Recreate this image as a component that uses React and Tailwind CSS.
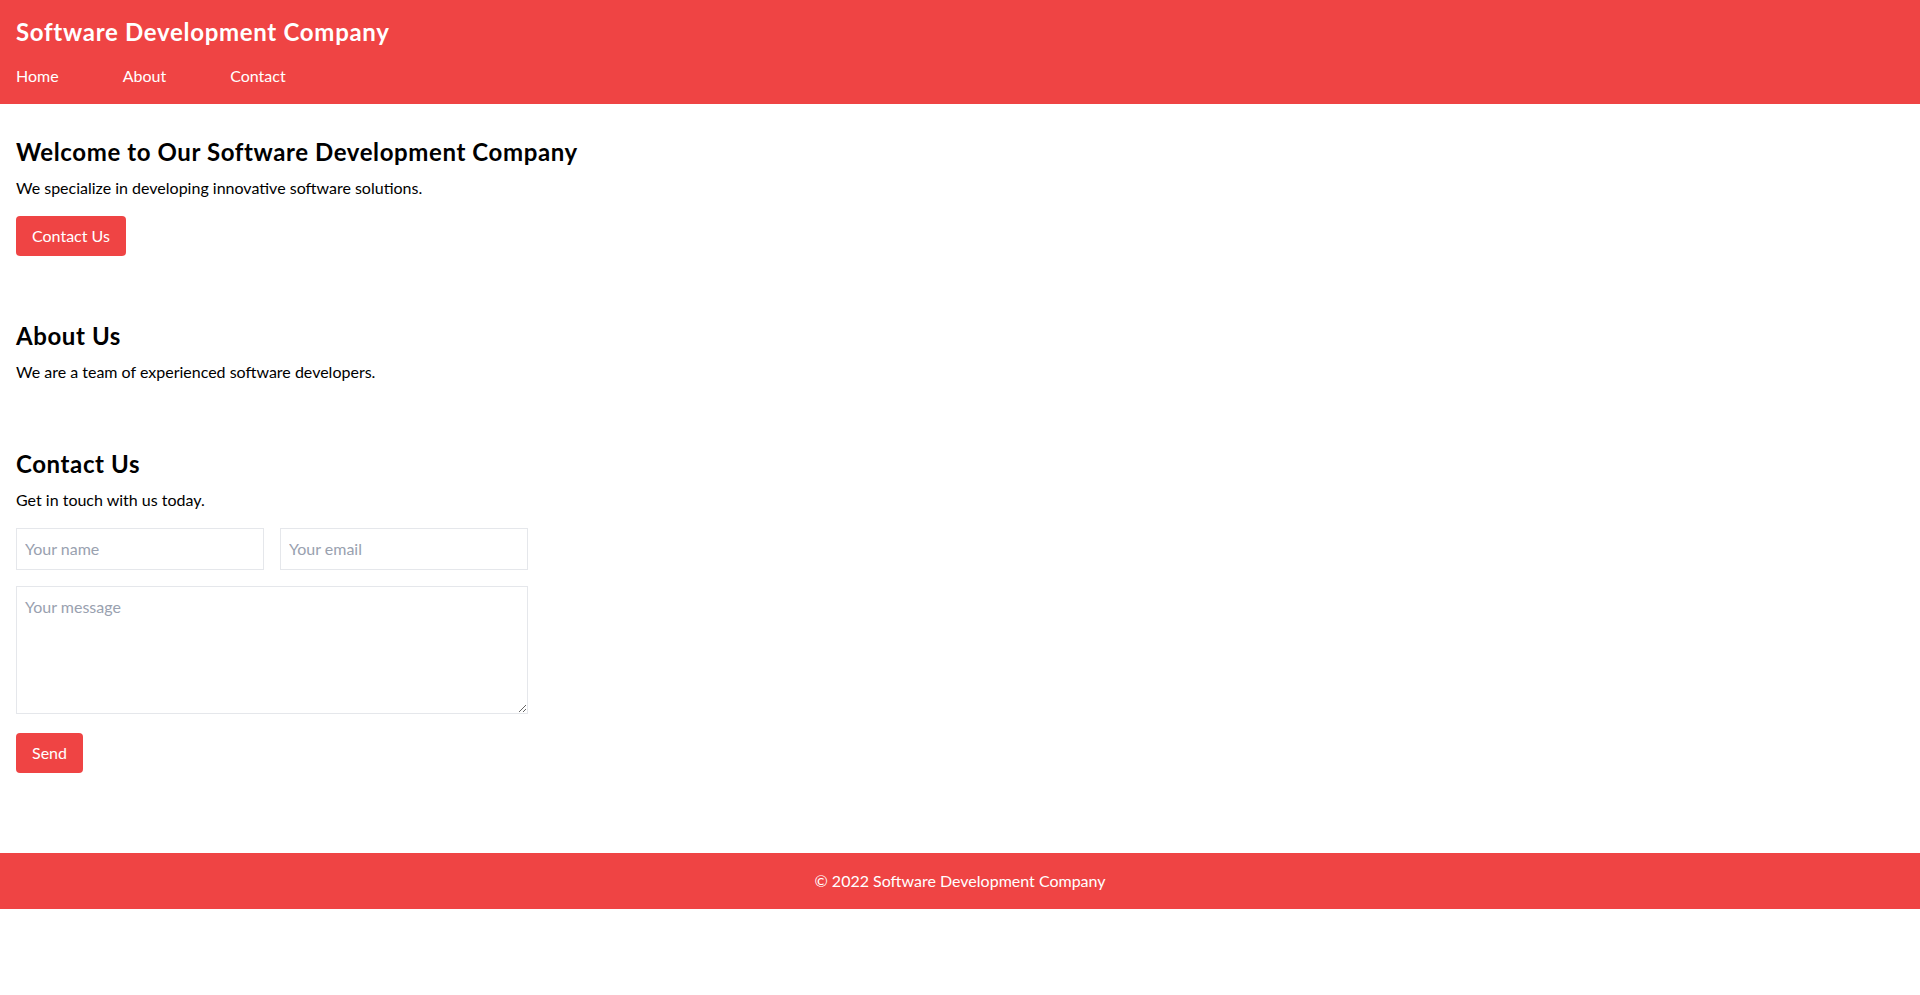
export default function App() {
  return (
    <div className="min-h-screen bg-white text-black font-['Lato','Liberation_Sans',sans-serif]">
      <header className="bg-[#ef4444] p-4 text-white">
        <h1 className="mb-4 text-2xl font-bold tracking-[0.7px]">Software Development Company</h1>
        <nav>
          <ul className="flex gap-16">
            <li><a href="#home">Home</a></li>
            <li><a href="#about">About</a></li>
            <li><a href="#contact">Contact</a></li>
          </ul>
        </nav>
      </header>

      <main className="px-4 pt-8 pb-4">
        <section id="home" className="mb-16">
          <h2 className="mb-2 text-2xl font-bold tracking-[0.6px]">Welcome to Our Software Development Company</h2>
          <p className="mb-4">We specialize in developing innovative software solutions.</p>
          <button className="rounded-sm bg-[#ef4444] px-4 py-2 text-white">Contact Us</button>
        </section>

        <section id="about" className="mb-16">
          <h2 className="mb-2 text-2xl font-bold tracking-[0.6px]">About Us</h2>
          <p>We are a team of experienced software developers.</p>
        </section>

        <section id="contact" className="mb-16">
          <h2 className="mb-2 text-2xl font-bold tracking-[0.6px]">Contact Us</h2>
          <p className="mb-4">Get in touch with us today.</p>
          <form className="max-w-lg" onSubmit={(e) => e.preventDefault()}>
            <div className="mb-4 grid grid-cols-2 gap-4">
              <input type="text" placeholder="Your name" className="w-full border border-gray-200 p-2 outline-none placeholder:text-gray-400" />
              <input type="email" placeholder="Your email" className="w-full border border-gray-200 p-2 outline-none placeholder:text-gray-400" />
            </div>
            <textarea placeholder="Your message" className="mb-[19px] block h-[128px] w-full border border-gray-200 p-2 outline-none placeholder:text-gray-400"></textarea>
            <button type="submit" className="rounded-sm bg-[#ef4444] px-4 py-2 text-white">Send</button>
          </form>
        </section>
      </main>

      <footer className="bg-[#ef4444] p-4 text-center text-white">
        <p>© 2022 Software Development Company</p>
      </footer>
    </div>
  );
}
